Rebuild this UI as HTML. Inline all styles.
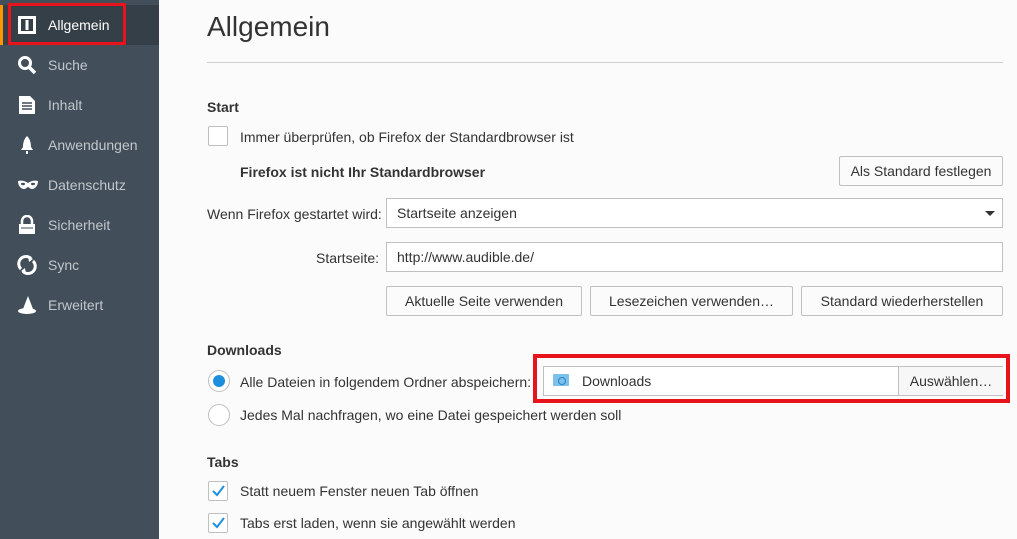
<!DOCTYPE html>
<html><head><style>
body{margin:0;width:1017px;height:539px;background:#fbfbfb;font-family:"Liberation Sans",sans-serif;position:relative;overflow:hidden;color:#333}
.sb{position:absolute;left:0;top:0;width:159px;height:539px;background:#424e5a}
.it{position:absolute;left:0;width:159px;height:40px;color:#c1c7cc;font-size:14px}
.it span{position:absolute;left:48px;top:12px}
.it svg{position:absolute;left:17px;top:10px}
.a{position:absolute}
.t{position:absolute;font-size:14px;color:#333;white-space:nowrap}
.b{position:absolute;font-size:14px;font-weight:bold;color:#333}
.btn{position:absolute;border:1px solid #c0c0c0;border-radius:2px;background:#fbfbfb;font-size:14px;text-align:center;box-sizing:border-box;line-height:28px}
.inp{position:absolute;border:1px solid #c0c0c0;background:#fff;box-sizing:border-box;font-size:14px;line-height:28px;padding-left:10px}
.cb{position:absolute;width:20px;height:20px;border:1px solid #c0c0c0;background:#fff;box-sizing:border-box;border-radius:2px}
.rd{position:absolute;width:22px;height:22px;border:1px solid #c0c0c0;background:#fff;box-sizing:border-box;border-radius:50%}
</style></head><body>
<div class="sb">
<div class="it" style="top:5px;background:#343f48;color:#fff"><svg width="20" height="20" viewBox="0 0 20 20"><rect x="1" y="1" width="18" height="18" fill="#fff"/><rect x="4" y="4" width="12" height="12" fill="#343f48"/><rect x="8.5" y="5" width="3" height="10" fill="#fff"/></svg><span>Allgemein</span></div>
<div class="a" style="left:0;top:5px;width:3px;height:40px;background:#ff9500"></div>
<div class="a" style="left:8px;top:3px;width:112px;height:36px;border:3px solid #e8141c"></div>
<div class="it" style="top:45px"><svg width="20" height="20" viewBox="0 0 20 20"><circle cx="8" cy="8" r="5.5" fill="none" stroke="#fff" stroke-width="3"/><path d="M12 12l6 6" stroke="#fff" stroke-width="3.5"/></svg><span>Suche</span></div>
<div class="it" style="top:85px"><svg width="20" height="20" viewBox="0 0 20 20"><path d="M2 1h11l5 5v13H2z" fill="#fff"/><path d="M5 8h10M5 11h10M5 14h10" stroke="#424e5a" stroke-width="1.5"/></svg><span>Inhalt</span></div>
<div class="it" style="top:125px"><svg width="20" height="20" viewBox="0 0 20 20"><path d="M10 1c3 3 4 7 4 11l2 3H4l2-3c0-4 1-8 4-11z" fill="#fff"/><path d="M9 16h2v3H9z" fill="#fff"/></svg><span>Anwendungen</span></div>
<div class="it" style="top:165px"><svg width="22" height="20" viewBox="0 0 22 20"><path d="M1 6c4-1 7 0 10 2 3-2 6-3 10-2 0 5-3 8-6 8-2 0-3-2-4-2s-2 2-4 2c-3 0-6-3-6-8z" fill="#fff"/><ellipse cx="6" cy="9" rx="2" ry="1.2" fill="#424e5a"/><ellipse cx="16" cy="9" rx="2" ry="1.2" fill="#424e5a"/></svg><span>Datenschutz</span></div>
<div class="it" style="top:205px"><svg width="20" height="20" viewBox="0 0 20 20"><path d="M5 9V6a5 5 0 0110 0v3" fill="none" stroke="#fff" stroke-width="2.5"/><rect x="2" y="9" width="16" height="10" fill="#fff"/><path d="M4 13h12" stroke="#424e5a" stroke-width="1"/></svg><span>Sicherheit</span></div>
<div class="it" style="top:245px"><svg width="20" height="20" viewBox="0 0 20 20"><path d="M4 14A7 7 0 0114 3.5M16 6A7 7 0 016 16.5" fill="none" stroke="#fff" stroke-width="3"/><path d="M11 1l5 3-4 3zM9 19l-5-3 4-3z" fill="#fff"/></svg><span>Sync</span></div>
<div class="it" style="top:285px"><svg width="20" height="20" viewBox="0 0 20 20"><path d="M11 1L6 14h10z" fill="#fff"/><ellipse cx="10" cy="16" rx="9" ry="3" fill="#fff"/></svg><span>Erweitert</span></div>
</div>
<div class="a" style="left:207px;top:11px;font-size:28px;color:#333">Allgemein</div>
<div class="a" style="left:207px;top:62px;width:796px;height:1px;background:#d0d0d0"></div>
<div class="b" style="left:207px;top:99px">Start</div>
<div class="cb" style="left:208px;top:126px"></div>
<div class="t" style="left:240px;top:129px">Immer überprüfen, ob Firefox der Standardbrowser ist</div>
<div class="b" style="left:240px;top:164px">Firefox ist nicht Ihr Standardbrowser</div>
<div class="btn" style="left:839px;top:156px;width:164px;height:30px">Als Standard festlegen</div>
<div class="t" style="left:207px;top:206px">Wenn Firefox gestartet wird:</div>
<div class="inp" style="left:386px;top:198px;width:617px;height:30px">Startseite anzeigen</div>
<div class="a" style="left:985px;top:211px;border:5px solid transparent;border-top:5px solid #333"></div>
<div class="t" style="left:316px;top:250px">Startseite:</div>
<div class="inp" style="left:386px;top:242px;width:617px;height:30px">http://www.audible.de/</div>
<div class="btn" style="left:386px;top:286px;width:196px;height:30px">Aktuelle Seite verwenden</div>
<div class="btn" style="left:590px;top:286px;width:203px;height:30px">Lesezeichen verwenden…</div>
<div class="btn" style="left:801px;top:286px;width:202px;height:30px">Standard wiederherstellen</div>
<div class="b" style="left:207px;top:342px">Downloads</div>
<div class="rd" style="left:208px;top:370px"></div>
<div class="a" style="left:213px;top:375px;width:12px;height:12px;border-radius:50%;background:#1e8fdc"></div>
<div class="t" style="left:240px;top:374px">Alle Dateien in folgendem Ordner abspeichern:</div>
<div class="a" style="left:533px;top:354px;width:469px;height:41px;border:4px solid #e8141c"></div>
<div class="inp" style="left:543px;top:366px;width:460px;height:30px;padding-left:38px">Downloads</div>
<div class="a" style="left:553px;top:374px;width:16px;height:12px;background:#7cc1ec;border-radius:1px"></div>
<div class="a" style="left:558px;top:377px;width:6px;height:6px;border-radius:50%;border:1px solid #2f7fbf"></div>
<div class="a" style="left:898px;top:367px;width:104px;height:28px;border-left:1px solid #c0c0c0;background:#f7f7f7;font-size:14px;text-align:center;line-height:28px">Auswählen…</div>
<div class="rd" style="left:208px;top:404px"></div>
<div class="t" style="left:240px;top:407px">Jedes Mal nachfragen, wo eine Datei gespeichert werden soll</div>
<div class="b" style="left:207px;top:454px">Tabs</div>
<div class="cb" style="left:208px;top:481px"></div>
<svg class="a" style="left:212px;top:485px" width="13" height="12"><path d="M1 6l4 4 7-9" fill="none" stroke="#1e8fdc" stroke-width="2"/></svg>
<div class="t" style="left:240px;top:483px">Statt neuem Fenster neuen Tab öffnen</div>
<div class="cb" style="left:208px;top:513px"></div>
<svg class="a" style="left:212px;top:517px" width="13" height="12"><path d="M1 6l4 4 7-9" fill="none" stroke="#1e8fdc" stroke-width="2"/></svg>
<div class="t" style="left:240px;top:515px">Tabs erst laden, wenn sie angewählt werden</div>
</body></html>
